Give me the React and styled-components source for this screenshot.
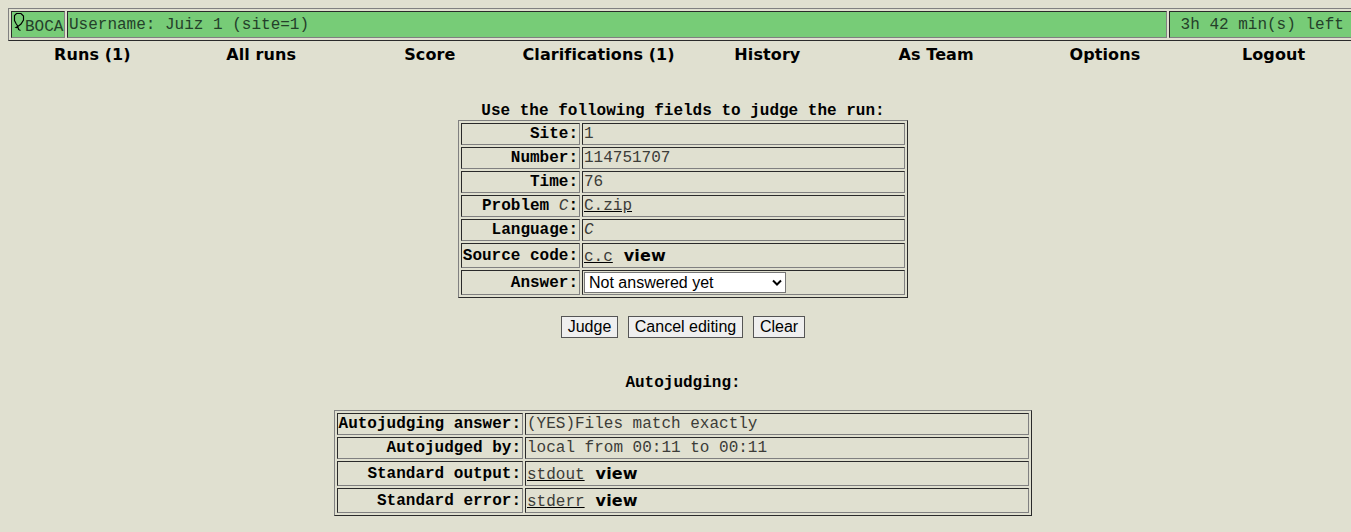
import React from 'react';
import styled, { createGlobalStyle } from 'styled-components';

const LIGHT = '#808080';
const DARK = '#2a2a2a';

const GlobalStyle = createGlobalStyle`
  html, body { margin: 0; background: #e0e0d0; overflow: hidden; }
`;

const Page = styled.div`
  box-sizing: border-box;
  width: 1364px;
  height: 532px;
  padding: 8px 8px 0;
  background: #e0e0d0;
  color: #000;
  font-family: 'Liberation Mono', monospace;
  font-size: 16px;
  line-height: 18px;
  white-space: pre;
`;

const Frame = styled.div`
  box-sizing: border-box;
  display: grid;
  grid-template-columns: ${(p) => p.$columns};
  grid-template-rows: ${(p) => p.$rows};
  gap: 2px;
  width: ${(p) => p.$width}px;
  padding: 2px;
  border: 1px solid;
  border-color: ${LIGHT} ${DARK} ${DARK} ${LIGHT};
`;

const Cell = styled.div`
  box-sizing: border-box;
  display: flex;
  align-items: center;
  padding: 0 1px;
  border: 1px solid;
  border-color: ${DARK} ${LIGHT} ${LIGHT} ${DARK};
  color: #3c3c38;
`;

const HeaderCell = styled(Cell)`
  background: #77cc77;
  color: #24402a;
`;

const Brand = styled(HeaderCell)`
  align-items: flex-start;
  padding: 0;
`;

const BrandName = styled.span`
  padding-top: 6px;
`;

const LabelCell = styled(Cell)`
  justify-content: flex-end;
  color: #000;
  font-weight: bold;
`;

const Letter = styled.i`
  color: #3c3c38;
  font-weight: normal;
`;

const Menu = styled.nav`
  display: grid;
  grid-template-columns: repeat(8, 1fr);
  width: 1350px;
  height: 27px;
  line-height: 27px;
  text-align: center;
`;

const MenuLink = styled.a`
  color: #000;
  font-family: 'DejaVu Sans', sans-serif;
  font-size: 16px;
  font-weight: bold;
  letter-spacing: 0.1px;
`;

const ViewLink = styled(MenuLink)`
  margin-left: 11px;
`;

const FileLink = styled.a`
  padding-top: ${(p) => (p.$lowered ? 2 : 0)}px;
  color: #3c3c38;
  text-decoration: underline;
  text-decoration-color: #000;
`;

const Content = styled.main`
  display: flex;
  flex-direction: column;
  align-items: center;
  width: 1350px;
`;

const Title = styled.div`
  height: 18px;
  margin-top: ${(p) => p.$top}px;
  margin-bottom: ${(p) => p.$bottom}px;
  font-weight: bold;
`;

const AnswerSelect = styled.div`
  box-sizing: border-box;
  display: flex;
  align-items: center;
  justify-content: space-between;
  width: 202px;
  height: 21px;
  padding: 0 3px 0 4px;
  border: 1px solid #767676;
  background: #fff;
  color: #000;
  font-family: 'Liberation Sans', sans-serif;
`;

const Buttons = styled.div`
  display: flex;
  gap: 10px;
  margin-top: 18px;
`;

const Button = styled.button`
  box-sizing: border-box;
  width: ${(p) => p.$width}px;
  height: 22px;
  padding: 0;
  border: 1px solid #555;
  border-radius: 0;
  background: #efefef;
  color: #000;
  font: 16px/18px 'Liberation Sans', sans-serif;
`;

const BalloonIcon = styled.svg`
  flex: none;
  width: 13px;
  height: 20px;
`;

const Balloon = () => (
  <BalloonIcon viewBox="0 0 13 20" fill="none" stroke="#000" strokeWidth="1.15">
    <path d="M4.5 1.5h4.5l2.5 2.5v4l-2.5 4-3 2.5L4 11.5 2.5 8.5v-5zM6.5 14L4 15.5l2.5.5v1.5l2 1" />
  </BalloonIcon>
);

const Chevron = () => (
  <svg width="10" height="8" viewBox="0 0 10 8" fill="none" stroke="#000" strokeWidth="2">
    <path d="M1 1.5l4 4 4-4" />
  </svg>
);

const menu = ['Runs (1)', 'All runs', 'Score', 'Clarifications (1)', 'History', 'As Team', 'Options', 'Logout'];

const FileCell = ({ name }) => (
  <Cell>
    <FileLink $lowered>{name}</FileLink>
    <ViewLink>view</ViewLink>
  </Cell>
);

export default function App() {
  return (
    <>
      <GlobalStyle />
      <Page>
        <Frame $columns="54px 1100px 1fr" $rows="27px" $width={1348}>
          <Brand>
            <Balloon />
            <BrandName>BOCA</BrandName>
          </Brand>
          <HeaderCell>Username: Juiz 1 (site=1)</HeaderCell>
          <HeaderCell>{' 3h 42 min(s) left'}</HeaderCell>
        </Frame>
        <Menu>
          {menu.map((item) => (
            <MenuLink key={item}>{item}</MenuLink>
          ))}
        </Menu>
        <Content>
          <Title $top={34} $bottom={0}>Use the following fields to judge the run:</Title>
          <Frame $columns="119px 323px" $rows="repeat(5, 22px) 25px 25px" $width={450}>
            <LabelCell>Site:</LabelCell>
            <Cell>1</Cell>
            <LabelCell>Number:</LabelCell>
            <Cell>114751707</Cell>
            <LabelCell>Time:</LabelCell>
            <Cell>76</Cell>
            <LabelCell>Problem <Letter>C</Letter>:</LabelCell>
            <Cell><FileLink>C.zip</FileLink></Cell>
            <LabelCell>Language:</LabelCell>
            <Cell><Letter>C</Letter></Cell>
            <LabelCell>Source code:</LabelCell>
            <FileCell name="c.c" />
            <LabelCell>Answer:</LabelCell>
            <Cell>
              <AnswerSelect>
                Not answered yet
                <Chevron />
              </AnswerSelect>
            </Cell>
          </Frame>
          <Buttons>
            <Button $width={57}>Judge</Button>
            <Button $width={115}>Cancel editing</Button>
            <Button $width={52}>Clear</Button>
          </Buttons>
          <Title $top={36} $bottom={18}>Autojudging:</Title>
          <Frame $columns="186px 504px" $rows="22px 22px 25px 25px" $width={698}>
            <LabelCell>Autojudging answer:</LabelCell>
            <Cell>(YES)Files match exactly</Cell>
            <LabelCell>Autojudged by:</LabelCell>
            <Cell>local from 00:11 to 00:11</Cell>
            <LabelCell>Standard output:</LabelCell>
            <FileCell name="stdout" />
            <LabelCell>Standard error:</LabelCell>
            <FileCell name="stderr" />
          </Frame>
        </Content>
      </Page>
    </>
  );
}
